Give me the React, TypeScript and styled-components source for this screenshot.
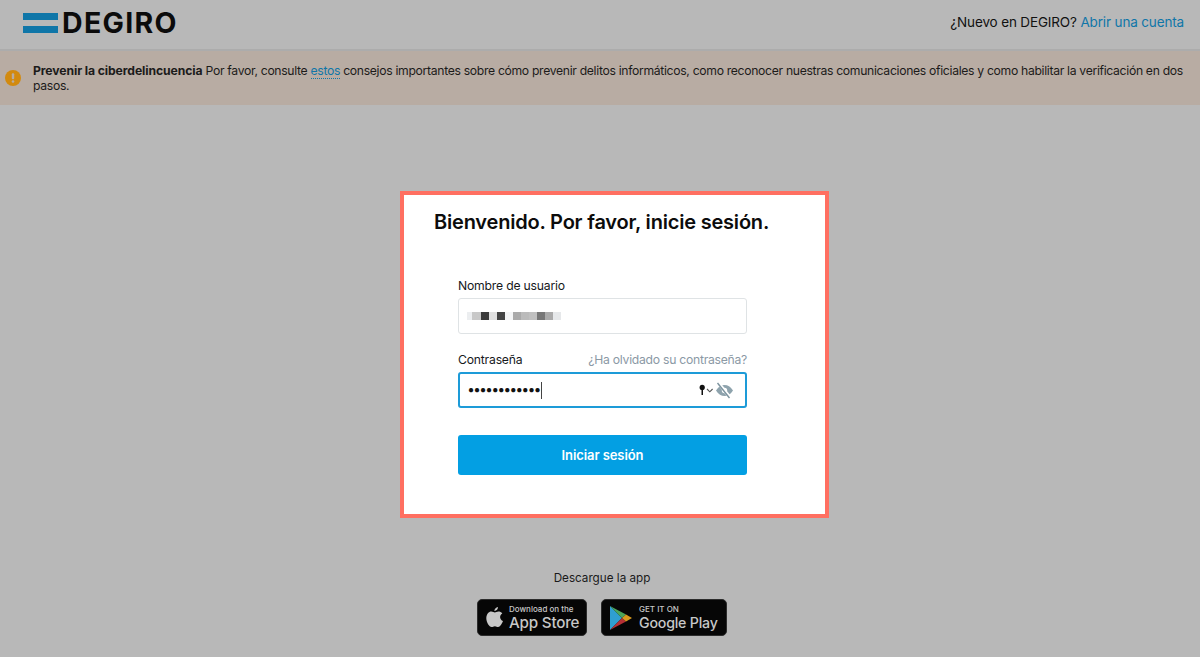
import React from "react";
import styled, { createGlobalStyle } from "styled-components";

const Global = createGlobalStyle`
  html, body { margin: 0; padding: 0; }
  body { background: #b8b8b8; font-family: Inter, "Liberation Sans", sans-serif; color: #0c0c0c; }
  * { box-sizing: border-box; }
`;

const Page = styled.div`
  width: 1200px;
  height: 657px;
  overflow: hidden;
  display: flex;
  flex-direction: column;
  background: #b8b8b8;
`;

const Header = styled.header`
  height: 51px;
  flex: none;
  padding: 0 16px 3px 23px;
  display: flex;
  align-items: center;
  justify-content: space-between;
  border-bottom: 2px solid #acacac;
`;

const Brand = styled.div`
  display: flex;
  align-items: center;
  gap: 4px;
`;

const BrandName = styled.span`
  font-size: 28.5px;
  font-weight: 700;
  letter-spacing: 1.3px;
  line-height: 24px;
  color: #0b0b0b;
`;

const SignUp = styled.div`
  margin-bottom: 2px;
  font-size: 13.5px;
  letter-spacing: -0.15px;
  line-height: 20px;
  color: #111;
`;

const Link = styled.a`
  color: #0f76a8;
  text-decoration: none;
`;

const Banner = styled.section`
  height: 54px;
  flex: none;
  padding: 12px 14px 0 33px;
  position: relative;
  background: #b8aca3;
  font-size: 12.2px;
  letter-spacing: -0.32px;
  line-height: 15px;
  color: #1c1b1a;
`;

const BannerIcon = styled.svg`
  position: absolute;
  left: 5px;
  top: 19px;
`;

const Strong = styled.b`
  letter-spacing: -0.1px;
`;

const UnderLink = styled(Link)`
  border-bottom: 1px dotted #0f76a8;
`;

const Main = styled.main`
  flex: 1;
  display: flex;
  flex-direction: column;
  align-items: center;
`;

const Card = styled.form`
  width: 429px;
  height: 327px;
  margin: 86px 0 0 29px;
  padding: 14px 30px 0;
  background: #fff;
  border: 4px solid #ff6f61;
`;

const Title = styled.h1`
  margin: 0;
  font-size: 20px;
  letter-spacing: -0.2px;
  line-height: 26px;
  font-weight: 600;
  color: #0c0c0c;
`;

const Fields = styled.div`
  width: 289px;
  margin: 42px 0 0 24px;
`;

const LabelRow = styled.div`
  display: flex;
  justify-content: space-between;
  align-items: flex-start;
  height: 18px;
  margin-bottom: 3px;
`;

const Label = styled.label`
  font-size: 12.2px;
  letter-spacing: -0.2px;
  line-height: 18px;
  color: #16191c;
`;

const Forgot = styled.a`
  display: block;
  font-size: 12.2px;
  letter-spacing: -0.27px;
  line-height: 18px;
  color: #8b99a5;
  text-decoration: none;
`;

const InputBox = styled.div<{ $focus?: boolean }>`
  height: 36px;
  margin-bottom: 17px;
  padding: 0 8px;
  display: flex;
  align-items: center;
  border-radius: 3px;
  border: ${(p) => (p.$focus ? "2px solid #1d9bd8" : "1px solid #dfe3e5")};
`;

const Dots = styled.span`
  font-family: "Liberation Sans", sans-serif;
  font-size: 10px;
  color: #111;
  line-height: 16px;
`;

const Caret = styled.span`
  width: 1px;
  height: 17px;
  margin-left: 1px;
  background: #444;
`;

const Adornments = styled.div`
  margin-left: auto;
  margin-right: 3px;
  display: flex;
  align-items: center;
  gap: 1px;
`;

const Submit = styled.button`
  display: block;
  width: 100%;
  height: 40px;
  margin-top: 27px;
  border: 0;
  border-radius: 3px;
  background: #039fe3;
  color: #fff;
  font: 600 13px/20px Inter, "Liberation Sans", sans-serif;
  letter-spacing: -0.08px;
`;

const AppSection = styled.div`
  margin: 52px 0 0 4px;
  display: flex;
  flex-direction: column;
  align-items: center;
`;

const AppTitle = styled.div`
  font-size: 11.7px;
  line-height: 16px;
  color: #1a1a1a;
`;

const Badges = styled.div`
  margin-top: 13px;
  display: flex;
  gap: 14px;
`;

const Badge = styled.div<{ $w: number; $gap: number }>`
  width: ${(p) => p.$w}px;
  height: 37px;
  display: flex;
  align-items: center;
  gap: ${(p) => p.$gap}px;
  padding-left: 8px;
  background: #060606;
  border: 1px solid #2c2c2c;
  border-radius: 5px;
  color: #c8c8c8;
`;

const BadgeText = styled.div`
  display: flex;
  flex-direction: column;
`;

const BadgeSmall = styled.span`
  font-size: 8px;
  line-height: 10px;
  font-weight: 500;
  white-space: nowrap;
`;

const BadgeBig = styled.span<{ $size: number }>`
  font-size: ${(p) => p.$size}px;
  line-height: 18px;
  font-weight: 500;
  letter-spacing: -0.2px;
  white-space: nowrap;
`;

const blur = [
  [0, 5, "#eceef0"], [5, 9, "#c8c8c8"], [14, 8, "#3a3a3a"], [22, 8, "#e0e0e0"], [30, 8, "#444"], [38, 8, "#f4f5f6"],
  [46, 8, "#aaa"], [54, 8, "#bbb"], [62, 8, "#c0c0c0"], [70, 8, "#777"], [78, 8, "#aaa"], [86, 8, "#e6e8ea"],
] as const;

export default function App() {
  return (
    <Page>
      <Global />
      <Header>
        <Brand>
          <svg width="35" height="20" viewBox="0 0 35 20">
            <rect y="0" width="35" height="7" fill="#0f76a8" />
            <rect y="13" width="35" height="7" fill="#0f76a8" />
          </svg>
          <BrandName>DEGIRO</BrandName>
        </Brand>
        <SignUp>
          ¿Nuevo en DEGIRO? <Link href="#">Abrir una cuenta</Link>
        </SignUp>
      </Header>
      <Banner>
        <BannerIcon width="16" height="16" viewBox="0 0 16 16">
          <circle cx="8" cy="8" r="8" fill="#d28a0f" />
          <rect x="6.8" y="3.2" width="2.4" height="6" rx="1" fill="#b8aca3" />
          <circle cx="8" cy="11.5" r="1.3" fill="#b8aca3" />
        </BannerIcon>
        <Strong>Prevenir la ciberdelincuencia</Strong> Por favor, consulte <UnderLink href="#">estos</UnderLink> consejos
        importantes sobre cómo prevenir delitos informáticos, como reconocer nuestras comunicaciones oficiales y como
        habilitar la verificación en dos pasos.
      </Banner>
      <Main>
        <Card>
          <Title>Bienvenido. Por favor, inicie sesión.</Title>
          <Fields>
            <LabelRow>
              <Label>Nombre de usuario</Label>
            </LabelRow>
            <InputBox>
              <svg width="94" height="8" viewBox="0 0 94 8" shapeRendering="crispEdges">
                {blur.map(([x, w, c]) => (
                  <rect key={x} x={x} y="0" width={w} height="8" fill={c} />
                ))}
              </svg>
            </InputBox>
            <LabelRow>
              <Label>Contraseña</Label>
              <Forgot href="#">¿Ha olvidado su contraseña?</Forgot>
            </LabelRow>
            <InputBox $focus>
              <Dots>●●●●●●●●●●●●</Dots>
              <Caret />
              <Adornments>
                <svg width="15" height="12" viewBox="0 0 15 12">
                  <circle cx="3.2" cy="3.4" r="2.6" fill="#111" />
                  <rect x="2.5" y="5" width="1.5" height="6" fill="#111" />
                  <path d="M8 5l2.8 2.8L13.6 5" fill="none" stroke="#555" strokeWidth="1.1" />
                </svg>
                <svg width="19" height="17" viewBox="0 0 19 17">
                  <path d="M1 8.5C3.5 4.6 6.2 3 9.5 3s6 1.6 8.5 5.5C15.5 12.4 12.8 14 9.5 14S3.5 12.4 1 8.5z" fill="#8ea3ad" />
                  <circle cx="9.5" cy="8.5" r="2.7" fill="#fff" />
                  <path d="M3.5 1l12 15" stroke="#fff" strokeWidth="3.2" />
                  <path d="M2.5 1l12 15" stroke="#7b929e" strokeWidth="1.4" />
                </svg>
              </Adornments>
            </InputBox>
            <Submit type="button">Iniciar sesión</Submit>
          </Fields>
        </Card>
        <AppSection>
          <AppTitle>Descargue la app</AppTitle>
          <Badges>
            <Badge $w={110} $gap={5}>
              <svg width="18" height="21" viewBox="0 0 18 21">
                <path d="M12 0c.2 1.8-1.5 4.1-3.6 4C8.1 2.2 10 .2 12 0zM8.8 5.4c1 0 2-.9 3.7-.9 1.3 0 2.8.6 3.8 2-3.2 1.8-2.7 6.3.7 7.6-1 2.6-3 6-4.8 6-1.3 0-1.8-.8-3.3-.8s-2.1.8-3.3.8C3.3 20.1.3 15.3.3 11.3c0-4 2.6-6.7 5-6.7 1.5 0 2.6.8 3.500.8z" fill="#c8c8c8" />
              </svg>
              <BadgeText>
                <BadgeSmall>Download on the</BadgeSmall>
                <BadgeBig $size={15.2}>App Store</BadgeBig>
              </BadgeText>
            </Badge>
            <Badge $w={126} $gap={6}>
              <svg width="23" height="24" viewBox="0 0 23 24">
                <path d="M0 0l12 12L0 24z" fill="#2f9fd0" />
                <path d="M0 0l16 8.5-4 3.5z" fill="#4ca65a" />
                <path d="M0 24l16-8.5-4-3.5z" fill="#b53035" />
                <path d="M16 8.5l6 3.5-6 3.5-4-3.5z" fill="#d89a1e" />
              </svg>
              <BadgeText>
                <BadgeSmall>GET IT ON</BadgeSmall>
                <BadgeBig $size={14.2}>Google Play</BadgeBig>
              </BadgeText>
            </Badge>
          </Badges>
        </AppSection>
      </Main>
    </Page>
  );
}
